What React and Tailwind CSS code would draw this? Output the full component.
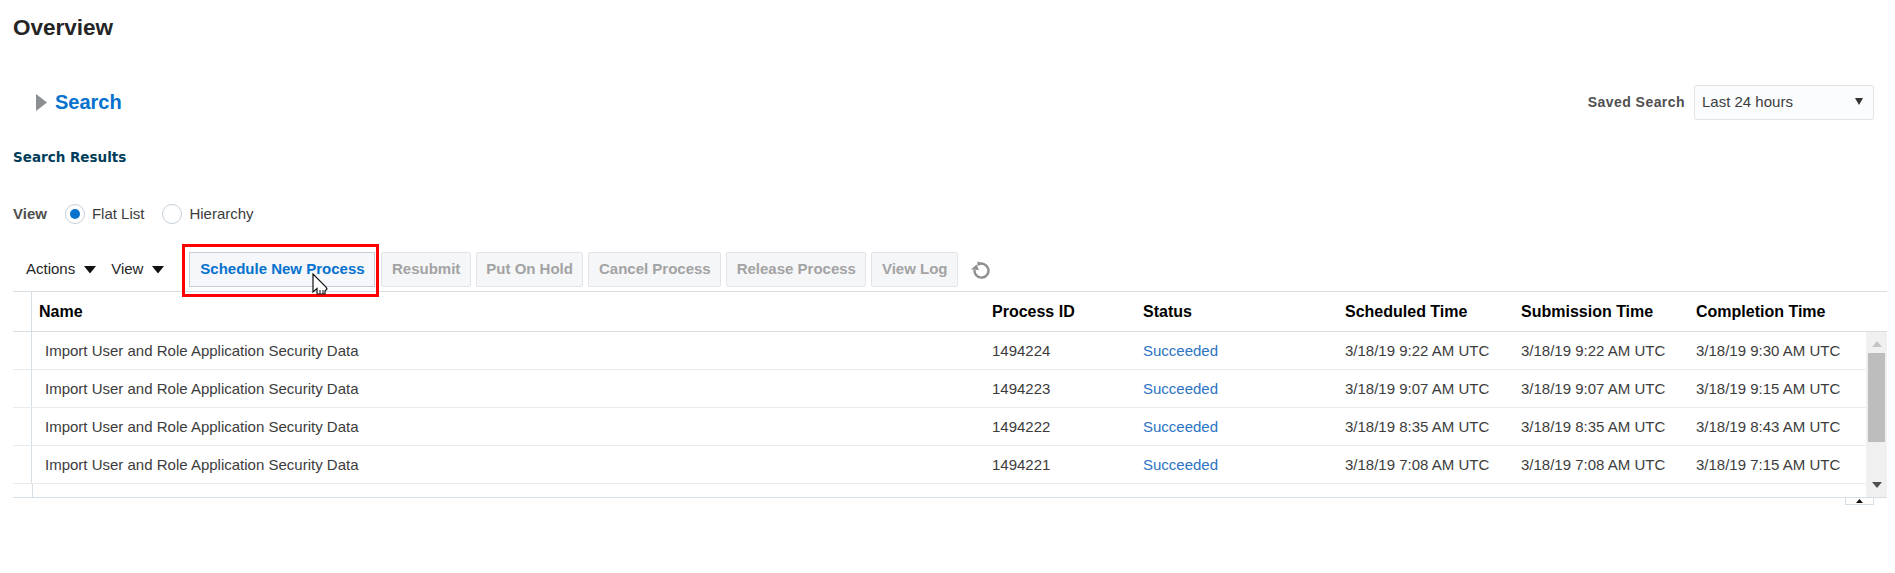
import React from "react";

const rows = [
  { id: "1494224", sched: "3/18/19 9:22 AM UTC", done: "3/18/19 9:30 AM UTC" },
  { id: "1494223", sched: "3/18/19 9:07 AM UTC", done: "3/18/19 9:15 AM UTC" },
  { id: "1494222", sched: "3/18/19 8:35 AM UTC", done: "3/18/19 8:43 AM UTC" },
  { id: "1494221", sched: "3/18/19 7:08 AM UTC", done: "3/18/19 7:15 AM UTC" },
];

const disabledButtons = ["Resubmit", "Put On Hold", "Cancel Process", "Release Process", "View Log"];

const gridCols = "grid grid-cols-[960px_151px_202px_176px_175px_169px]";

const Caret = () => (
  <svg width="14" height="9" viewBox="0 0 14 9" className="ml-2">
    <path d="M1 1h12L7 8.5z" fill="#111" />
  </svg>
);

const Cursor = () => (
  <svg width="17" height="23" viewBox="0 0 17 23" className="absolute left-[312px] top-[273px]">
    <path d="M1 1v18l4-3.500 0 5.500h8v-3l2-2-1-2L1 1z" fill="#fff" stroke="#111" strokeWidth="1.200" />
    <path d="M8 17v4M11 17v4" stroke="#111" strokeWidth="1" />
  </svg>
);

export default function App() {
  return (
    <div className="relative h-[573px] w-[1895px] overflow-hidden bg-white font-['Liberation_Sans',Arial,sans-serif] text-[15px] text-[#3c3c3c]">
      <h1 className="pl-[13px] pt-[15px] text-[22.5px] font-bold leading-[26px] text-[#252525]">Overview</h1>

      <div className="mt-[43px] flex h-[36px] items-center justify-between pl-[36px] pr-[21px]">
        <div className="flex items-center">
          <svg width="11" height="17" viewBox="0 0 11 17">
            <path d="M0 0l11 8.500L0 17z" fill="#8c8f92" />
          </svg>
          <span className="ml-[8px] text-[20px] font-bold text-[#0572ce]">Search</span>
        </div>
        <div className="flex items-center">
          <span className="mr-[9px] text-[14px] font-bold tracking-[0.45px] text-[#4f4f4f]">Saved Search</span>
          <div className="flex h-[35px] w-[180px] items-center justify-between rounded-[2px] border border-[#dfe4e7] bg-[#fbfcfe] pl-[7px] pr-[9px]">
            <span>Last 24 hours</span>
            <svg width="10" height="8" viewBox="0 0 10 8">
              <path d="M1 0h8L5 7z" fill="#333" />
            </svg>
          </div>
        </div>
      </div>

      <h2 className="mt-[29px] pl-[13px] font-['DejaVu_Sans',sans-serif] text-[13.5px] font-bold leading-[17px] text-[#003d5b]">Search Results</h2>

      <div className="mt-[37px] flex h-[22px] items-center pl-[13px]">
        <span className="font-bold text-[#4f4f4f]">View</span>
        <span className="ml-[18px] flex h-[20px] w-[20px] items-center justify-center rounded-full border border-[#c4ced7]">
          <span className="h-[10px] w-[10px] rounded-full bg-[#0572ce]" />
        </span>
        <span className="ml-[7px]">Flat List</span>
        <span className="ml-[18px] h-[20px] w-[20px] rounded-full border border-[#c4ced7]" />
        <span className="ml-[7px]">Hierarchy</span>
      </div>

      <div className="mt-[27px] flex h-[35px] items-center pl-[26px]">
        <span className="flex items-center text-[#252525]">Actions<Caret /></span>
        <span className="ml-[14px] flex items-center text-[#252525]">View<Caret /></span>
        <button className="ml-[24px] h-[35px] w-[186px] border border-[#c4ced7] bg-[#f5f7fa] text-[15px] font-bold text-[#0572ce]">
          Schedule New Process
        </button>
        <div className="ml-[6px] flex gap-[5px]">
          {disabledButtons.map((label) => (
            <button
              key={label}
              className="h-[35px] rounded-[2px] border border-[#e1e5e9] bg-[#f5f6f8] px-[9.5px] text-[15px] font-bold text-[#a3a3a3]"
            >
              {label}
            </button>
          ))}
        </div>
        <svg width="20" height="18" viewBox="0 0 20 18" className="ml-[13px]">
          <path d="M7 3.500A7 7 0 1 1 3.500 9" fill="none" stroke="#8d8f91" strokeWidth="2.400" />
          <path d="M0 8.500l5.500-5L8 9z" fill="#8d8f91" />
          <path d="M6.500 0L11 3 6.500 5z" fill="#8d8f91" />
        </svg>
      </div>

      {/* table */}
      <div className="ml-[13px] mt-[4px] w-[1874px] border-y border-[#d6dfe6]">
        <div className="flex h-[40px] border-b border-[#d6dfe6]">
          <div className="w-[19px] border-r border-[#d6dfe6]" />
          <div className={`${gridCols} flex-1 items-center text-[16px] font-bold text-black`}>
            <span className="pl-[7px]">Name</span>
            <span>Process ID</span>
            <span>Status</span>
            <span>Scheduled Time</span>
            <span>Submission Time</span>
            <span>Completion Time</span>
          </div>
        </div>
        <div className="flex h-[165px]">
          <div className="flex-1">
            {rows.map((row) => (
              <div key={row.id} className="flex h-[38px] border-b border-[#e8ebee]">
                <div className="w-[19px] border-r border-[#d6dfe6]" />
                <div className={`${gridCols} flex-1 items-center pt-[1px]`}>
                  <span className="pl-[13px]">Import User and Role Application Security Data</span>
                  <span>{row.id}</span>
                  <span className="text-[#2c74c4]">Succeeded</span>
                  <span>{row.sched}</span>
                  <span>{row.sched}</span>
                  <span>{row.done}</span>
                </div>
              </div>
            ))}
            <div className="h-[13px] w-[20px] border-r border-[#d6dfe6]" />
          </div>
          <div className="flex w-[21px] flex-col items-center bg-[#f0f0f0]">
            <svg width="10" height="6" viewBox="0 0 10 6" className="mt-[9px]">
              <path d="M0 6l5-6 5 6z" fill="#c4c4c4" />
            </svg>
            <div className="mt-[6px] h-[89px] w-[17px] bg-[#bdbdbd]" />
            <svg width="10" height="6" viewBox="0 0 10 6" className="mt-auto mb-[9px]">
              <path d="M0 0l5 6 5-6z" fill="#505050" />
            </svg>
          </div>
        </div>
      </div>

      {/* bottom collapse tab */}
      <div className="absolute left-[1845px] top-[497px] flex h-[8px] w-[29px] items-center justify-center border-x border-b border-[#d6dfe6]">
        <svg width="7" height="4" viewBox="0 0 7 4">
          <path d="M0 4l3.500-4L7 4z" fill="#111" />
        </svg>
      </div>

      {/* red annotation and pointer over the page */}
      <div className="absolute left-[182px] top-[244px] h-[53px] w-[197px] border-[3px] border-[#ff0000]" />
      <Cursor />
    </div>
  );
}
